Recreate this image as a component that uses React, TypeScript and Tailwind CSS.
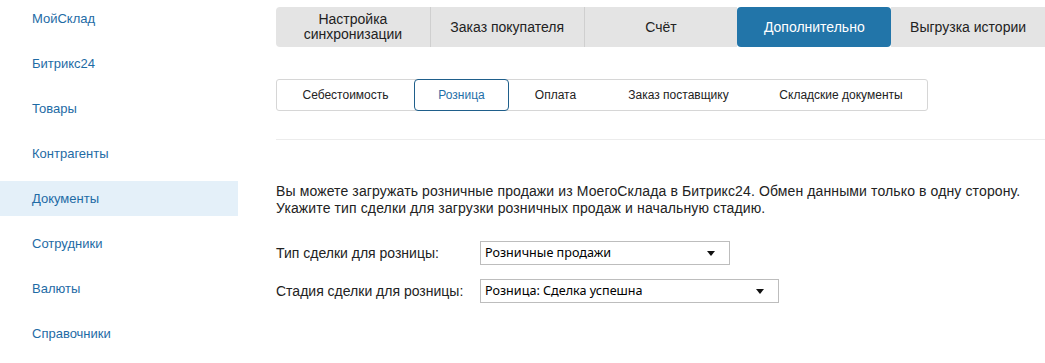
import React from "react";

const sideItems = ["МойСклад", "Битрикс24", "Товары", "Контрагенты", "Документы", "Сотрудники", "Валюты", "Справочники"];
const topTabs = ["Настройка синхронизации", "Заказ покупателя", "Счёт", "Дополнительно", "Выгрузка истории"];
const subTabs = [
  { t: "Себестоимость", w: "w-[137px]" },
  { t: "Розница", w: "w-[95px]" },
  { t: "Оплата", w: "w-[93px]" },
  { t: "Заказ поставщику", w: "w-[153px]" },
  { t: "Складские документы", w: "w-[172px]" },
];

function Caret() {
  return (
    <svg width="8" height="5" viewBox="0 0 8 5" className="shrink-0">
      <path d="M0 0 H8 L4 5 Z" fill="#111" />
    </svg>
  );
}

export default function App() {
  return (
    <div className="flex w-[1045px] h-[363px] bg-white overflow-hidden font-['Liberation_Sans',Arial,sans-serif]">
      <div className="w-[238px] shrink-0 flex flex-col pt-[1px]">
        {sideItems.map((s) => (
          <div
            key={s}
            className={`h-[35px] mb-[10px] flex items-center pl-[32px] text-[13px] text-[#1e6ba5] ${s === "Документы" ? "bg-[#e4f0f9]" : ""}`}
          >
            {s}
          </div>
        ))}
      </div>
      <div className="flex-1 pl-[38px] pt-[7px]">
        <div className="flex h-[40px] w-[769px]">
          {topTabs.map((t, i) => {
            const active = i === 3;
            return (
              <div
                key={t}
                className={`w-[153.8px] flex items-center justify-center text-center text-[14px] leading-[15px] px-2 ${
                  active
                    ? "bg-[#2275a9] text-white rounded-[4px]"
                    : "bg-[#e4e4e4] text-[#222]"
                } ${i === 0 ? "rounded-l-[4px]" : ""} ${i > 0 && i !== 3 && i !== 4 ? "border-l border-[#cfcfcf]" : ""}`}
              >
                {t}
              </div>
            );
          })}
        </div>
        <div className="mt-[32px] flex h-[32px] w-fit border border-[#d6d6d6] rounded-[3px]">
          {subTabs.map((s, i) => (
            <div
              key={s.t}
              className={`${s.w} flex items-center justify-center text-[12px] ${
                i === 1
                  ? "border border-[#1f5f8b] rounded-[4px] text-[#1f6fa8] -my-[1px] h-[32px]"
                  : "text-[#222]"
              }`}
            >
              {s.t}
            </div>
          ))}
        </div>
        <div className="mt-[28px] h-px w-[769px] bg-[#ececec]" />
        <div className="mt-[43px] text-[14px] leading-[17px] tracking-[0.12px] text-[#222]">
          <div>Вы можете загружать розничные продажи из МоегоСклада в Битрикс24. Обмен данными только в одну сторону.</div>
          <div>Укажите тип сделки для загрузки розничных продаж и начальную стадию.</div>
        </div>
        <div className="mt-[24px] flex items-center h-[24px]">
          <div className="w-[204px] text-[14px] text-[#222]">Тип сделки для розницы:</div>
          <div className="w-[250px] h-[24px] border border-[#bdbdbd] flex items-center justify-between pl-[4px] pr-[14px] text-[12.6px] text-black font-['Noto_Sans',sans-serif]">
            <span>Розничные продажи</span>
            <Caret />
          </div>
        </div>
        <div className="mt-[14px] flex items-center h-[24px]">
          <div className="w-[204px] text-[14px] text-[#222]">Стадия сделки для розницы:</div>
          <div className="w-[299px] h-[24px] border border-[#bdbdbd] flex items-center justify-between pl-[4px] pr-[14px] text-[12.6px] text-black font-['Noto_Sans',sans-serif]">
            <span>Розница: Сделка успешна</span>
            <Caret />
          </div>
        </div>
      </div>
    </div>
  );
}
